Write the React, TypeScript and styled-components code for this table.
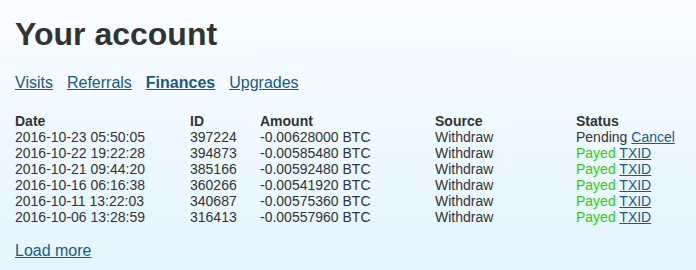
import { Fragment } from "react";
import styled, { createGlobalStyle } from "styled-components";

const GlobalStyle = createGlobalStyle`
  html, body {
    margin: 0;
    padding: 0;
  }
  body {
    min-height: 270px;
    background: linear-gradient(to bottom, #f9fdff 0%, #e4f5fe 100%);
    font-family: "Liberation Sans", Arial, sans-serif;
    color: #333;
  }
`;

const linkColor = "#1a5a80";

const Page = styled.div`
  padding: 16px 15px 0 15px;
`;

const Title = styled.h1`
  margin: 0;
  font-size: 32px;
  line-height: 36px;
  font-weight: bold;
  color: #333;
`;

const Nav = styled.nav`
  display: flex;
  gap: 14px;
  margin-top: 21px;
  font-size: 16px;
  line-height: 20px;
`;

const NavLink = styled.a<{ $active?: boolean }>`
  color: ${linkColor};
  text-decoration: underline;
  font-weight: ${(p) => (p.$active ? "bold" : "normal")};
  cursor: pointer;
`;

const Table = styled.div`
  display: grid;
  grid-template-columns: 175px 70px 175px 141px auto;
  margin-top: 20px;
  font-size: 14px;
  line-height: 16px;
`;

const Head = styled.div`
  font-weight: bold;
  color: #333;
`;

const Cell = styled.div`
  color: #333;
  white-space: nowrap;
`;

const Payed = styled.span`
  color: #33cc00;
`;

const SmallLink = styled.a`
  color: ${linkColor};
  text-decoration: underline;
  cursor: pointer;
`;

const LoadMore = styled.a`
  display: inline-block;
  margin-top: 16px;
  font-size: 16px;
  line-height: 20px;
  color: ${linkColor};
  text-decoration: underline;
  cursor: pointer;
`;

type Row = {
  date: string;
  id: string;
  amount: string;
  pending?: boolean;
};

const rows: Row[] = [
  { date: "2016-10-23 05:50:05", id: "397224", amount: "-0.00628000 BTC", pending: true },
  { date: "2016-10-22 19:22:28", id: "394873", amount: "-0.00585480 BTC" },
  { date: "2016-10-21 09:44:20", id: "385166", amount: "-0.00592480 BTC" },
  { date: "2016-10-16 06:16:38", id: "360266", amount: "-0.00541920 BTC" },
  { date: "2016-10-11 13:22:03", id: "340687", amount: "-0.00575360 BTC" },
  { date: "2016-10-06 13:28:59", id: "316413", amount: "-0.00557960 BTC" },
];

export default function App() {
  return (
    <>
      <GlobalStyle />
      <Page>
        <Title>Your account</Title>
        <Nav>
          <NavLink>Visits</NavLink>
          <NavLink>Referrals</NavLink>
          <NavLink $active>Finances</NavLink>
          <NavLink>Upgrades</NavLink>
        </Nav>
        <Table>
          <Head>Date</Head>
          <Head>ID</Head>
          <Head>Amount</Head>
          <Head>Source</Head>
          <Head>Status</Head>
          {rows.map((r) => (
            <Fragment key={r.id}>
              <Cell>{r.date}</Cell>
              <Cell>{r.id}</Cell>
              <Cell>{r.amount}</Cell>
              <Cell>Withdraw</Cell>
              <Cell>
                {r.pending ? (
                  <>
                    Pending <SmallLink>Cancel</SmallLink>
                  </>
                ) : (
                  <>
                    <Payed>Payed</Payed> <SmallLink>TXID</SmallLink>
                  </>
                )}
              </Cell>
            </Fragment>
          ))}
        </Table>
        <LoadMore>Load more</LoadMore>
      </Page>
    </>
  );
}
